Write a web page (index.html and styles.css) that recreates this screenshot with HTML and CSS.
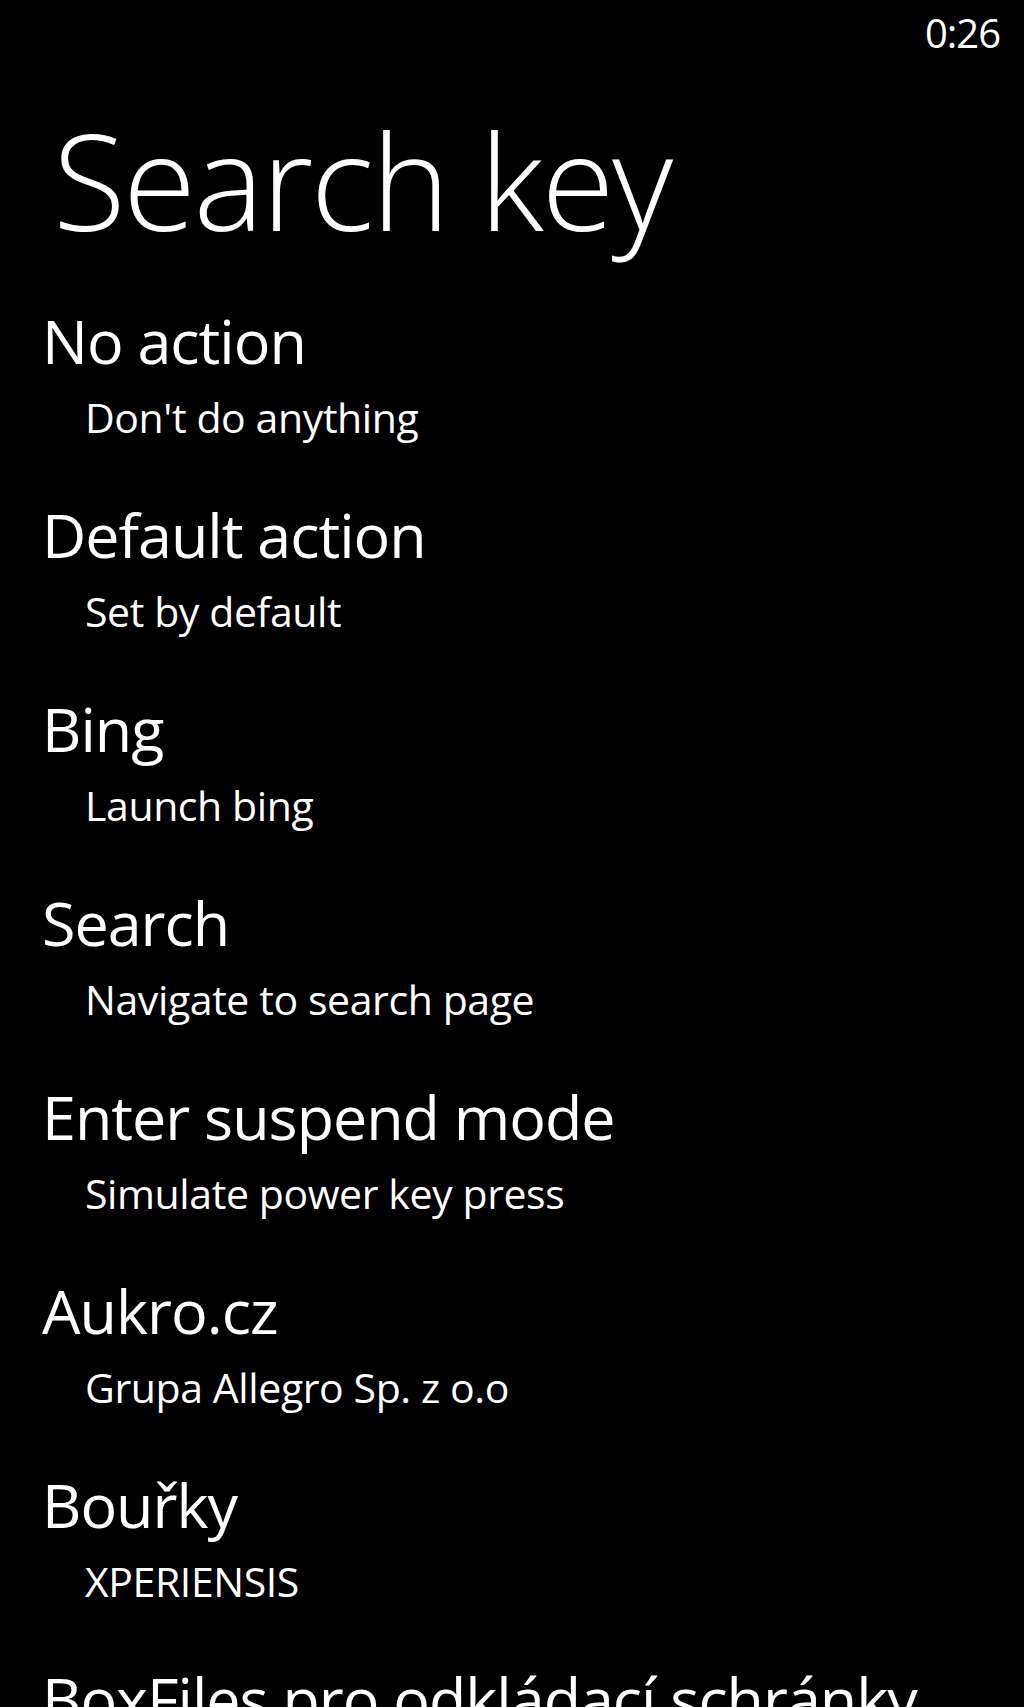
FILE: index.html
```html
<!DOCTYPE html>
<html lang="en">
<head>
<meta charset="utf-8">
<title>Search key</title>
<link rel="stylesheet" href="styles.css">
</head>
<body>
<div class="phone">
  <div class="status-bar"><span class="clock">0:26</span></div>
  <h1 class="page-title">Search key</h1>
  <ul class="action-list">
    <li class="action"><div class="action-name">No action</div><div class="action-desc">Don't do anything</div></li>
    <li class="action"><div class="action-name">Default action</div><div class="action-desc">Set by default</div></li>
    <li class="action"><div class="action-name">Bing</div><div class="action-desc">Launch bing</div></li>
    <li class="action"><div class="action-name">Search</div><div class="action-desc">Navigate to search page</div></li>
    <li class="action"><div class="action-name">Enter suspend mode</div><div class="action-desc">Simulate power key press</div></li>
    <li class="action"><div class="action-name">Aukro.cz</div><div class="action-desc">Grupa Allegro Sp. z o.o</div></li>
    <li class="action"><div class="action-name">Bouřky</div><div class="action-desc">XPERIENSIS</div></li>
    <li class="action"><div class="action-name">BoxFiles pro odkládací schránky</div></li>
  </ul>
</div>
</body>
</html>
```
FILE: styles.css
```css
html, body {
  margin: 0;
  padding: 0;
  background: #000;
}
body {
  color: #fff;
  font-family: "Open Sans", "Noto Sans", "Liberation Sans", sans-serif;
  overflow: hidden;
}
.phone {
  width: 1024px;
  height: 1707px;
  overflow: hidden;
  background: #000;
}
.status-bar {
  display: flex;
  justify-content: flex-end;
  padding: 8px 24px 0 0;
  height: 50px;
}
.clock {
  font-size: 40px;
  line-height: 50px;
  letter-spacing: -1px;
  font-weight: 400;
}
.page-title {
  margin: 47px 0 0 0;
  padding-left: 53px;
  font-size: 133px;
  line-height: 150px;
  font-weight: 300;
  letter-spacing: -2.5px;
  white-space: nowrap;
}
.action-list {
  list-style: none;
  margin: 46px 0 0 0;
  padding: 0 0 0 42px;
  display: flex;
  flex-direction: column;
  gap: 51px;
}
.action {
  display: flex;
  flex-direction: column;
}
.action-name {
  font-size: 61px;
  line-height: 80px;
  letter-spacing: -1px;
  white-space: nowrap;
}
.action-desc {
  margin-top: 9px;
  padding-left: 43px;
  font-size: 41px;
  line-height: 54px;
  letter-spacing: -0.4px;
  white-space: nowrap;
}
```
